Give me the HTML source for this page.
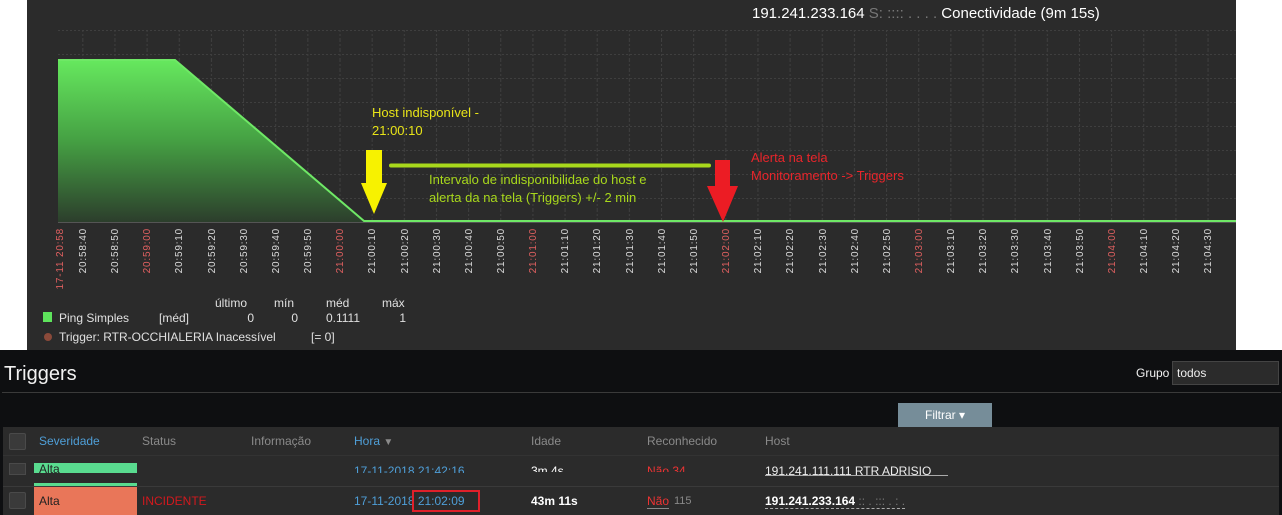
<!DOCTYPE html>
<html><head><meta charset="utf-8">
<style>
html,body{margin:0;padding:0;width:1282px;height:515px;overflow:hidden;background:#fff;font-family:"Liberation Sans",sans-serif;}
.abs{position:absolute;}
#bot{position:absolute;left:0;top:350px;width:1282px;height:165px;background:#0e0f11;}
.th{position:absolute;top:434px;font-size:12px;color:#8a8a8a;}
.cb{position:absolute;left:9px;width:15px;height:15px;background:#3a3a3a;border:1px solid #4a4a4a;border-radius:2px;}
</style></head><body>
<svg class="abs" style="left:0;top:0" width="1282" height="350" xmlns="http://www.w3.org/2000/svg">
<defs>
<linearGradient id="g" x1="0" y1="0" x2="0" y2="1">
<stop offset="0" stop-color="#66e85e"/><stop offset="0.5" stop-color="#45a043"/><stop offset="1" stop-color="#2c3e2c"/>
</linearGradient>
<pattern id="vg" x="18" y="0" width="32.15" height="10" patternUnits="userSpaceOnUse"><line x1="0.5" y1="0" x2="0.5" y2="10" stroke="#3f3f3f" stroke-dasharray="2,2"/></pattern>
</defs>
<rect x="27" y="0" width="1209" height="350" fill="#2b2b2b"/>
<rect x="58" y="30" width="1178" height="192" fill="url(#vg)"/>
<g stroke="#3f3f3f" stroke-dasharray="2,2">
<line x1="58" y1="30.5" x2="1236" y2="30.5"/><line x1="58" y1="54.5" x2="1236" y2="54.5"/>
<line x1="58" y1="78.5" x2="1236" y2="78.5"/><line x1="58" y1="102.5" x2="1236" y2="102.5"/>
<line x1="58" y1="126.5" x2="1236" y2="126.5"/><line x1="58" y1="150.5" x2="1236" y2="150.5"/>
<line x1="58" y1="174.5" x2="1236" y2="174.5"/><line x1="58" y1="198.5" x2="1236" y2="198.5"/>
</g>
<polygon points="58,60 175,60 364,221 364,222 58,222" fill="url(#g)"/>
<polyline points="58,60 175,60 364,221 1236,221" fill="none" stroke="#6fe866" stroke-width="2"/>
<line x1="58" y1="222.5" x2="1236" y2="222.5" stroke="#555"/>
<text x="752" y="18" fill="#fff" font-size="15">191.241.233.164 <tspan fill="#777">S: :::: .  . . .</tspan> Conectividade (9m 15s)</text>
<text x="372" y="117" fill="#e8e418" font-size="13">Host indisponível -</text>
<text x="372" y="135" fill="#e8e418" font-size="13">21:00:10</text>
<line x1="391" y1="165.5" x2="709" y2="165.5" stroke="#a8d81c" stroke-width="4" stroke-linecap="round"/>
<text x="429" y="184" fill="#a8d81c" font-size="13">Intervalo de indisponibilidae do host e</text>
<text x="429" y="202" fill="#a8d81c" font-size="13">alerta da na tela (Triggers) +/- 2 min</text>
<polygon points="366,150 382,150 382,183 387,183 374,214 361,183 366,183" fill="#f7f200"/>
<text x="751" y="162" fill="#e8252b" font-size="13">Alerta na tela</text>
<text x="751" y="180" fill="#e8252b" font-size="13">Monitoramento -&gt; Triggers</text>
<polygon points="715,160 730,160 730,186 738,186 723,222 707,186 715,186" fill="#ec1c24"/>
<g font-size="10" font-family="Liberation Sans,sans-serif" letter-spacing="0.8" fill="#dcdcdc" text-anchor="end">
<text transform="translate(63,228) rotate(-90)" fill="#e06060">17-11 20:58</text>
<text transform="translate(86,228) rotate(-90)">20:58:40</text>
<text transform="translate(118,228) rotate(-90)">20:58:50</text>
<text transform="translate(150,228) rotate(-90)" fill="#e06060">20:59:00</text>
<text transform="translate(182,228) rotate(-90)">20:59:10</text>
<text transform="translate(215,228) rotate(-90)">20:59:20</text>
<text transform="translate(247,228) rotate(-90)">20:59:30</text>
<text transform="translate(279,228) rotate(-90)">20:59:40</text>
<text transform="translate(311,228) rotate(-90)">20:59:50</text>
<text transform="translate(343,228) rotate(-90)" fill="#e06060">21:00:00</text>
<text transform="translate(375,228) rotate(-90)">21:00:10</text>
<text transform="translate(408,228) rotate(-90)">21:00:20</text>
<text transform="translate(440,228) rotate(-90)">21:00:30</text>
<text transform="translate(472,228) rotate(-90)">21:00:40</text>
<text transform="translate(504,228) rotate(-90)">21:00:50</text>
<text transform="translate(536,228) rotate(-90)" fill="#e06060">21:01:00</text>
<text transform="translate(568,228) rotate(-90)">21:01:10</text>
<text transform="translate(600,228) rotate(-90)">21:01:20</text>
<text transform="translate(633,228) rotate(-90)">21:01:30</text>
<text transform="translate(665,228) rotate(-90)">21:01:40</text>
<text transform="translate(697,228) rotate(-90)">21:01:50</text>
<text transform="translate(729,228) rotate(-90)" fill="#e06060">21:02:00</text>
<text transform="translate(761,228) rotate(-90)">21:02:10</text>
<text transform="translate(793,228) rotate(-90)">21:02:20</text>
<text transform="translate(826,228) rotate(-90)">21:02:30</text>
<text transform="translate(858,228) rotate(-90)">21:02:40</text>
<text transform="translate(890,228) rotate(-90)">21:02:50</text>
<text transform="translate(922,228) rotate(-90)" fill="#e06060">21:03:00</text>
<text transform="translate(954,228) rotate(-90)">21:03:10</text>
<text transform="translate(986,228) rotate(-90)">21:03:20</text>
<text transform="translate(1018,228) rotate(-90)">21:03:30</text>
<text transform="translate(1051,228) rotate(-90)">21:03:40</text>
<text transform="translate(1083,228) rotate(-90)">21:03:50</text>
<text transform="translate(1115,228) rotate(-90)" fill="#e06060">21:04:00</text>
<text transform="translate(1147,228) rotate(-90)">21:04:10</text>
<text transform="translate(1179,228) rotate(-90)">21:04:20</text>
<text transform="translate(1211,228) rotate(-90)">21:04:30</text>
</g>
<g font-size="12" fill="#e0e0e0">
<text x="215" y="307">último</text><text x="274" y="307">mín</text><text x="326" y="307">méd</text><text x="382" y="307">máx</text>
<rect x="43" y="312" width="9" height="10" fill="#5ee35c"/>
<text x="59" y="322">Ping Simples</text><text x="159" y="322">[méd]</text>
<text x="254" y="322" text-anchor="end">0</text><text x="298" y="322" text-anchor="end">0</text>
<text x="360" y="322" text-anchor="end">0.1111</text><text x="406" y="322" text-anchor="end">1</text>
<circle cx="48" cy="337" r="4" fill="#8b4a3a"/>
<text x="59" y="341">Trigger: RTR-OCCHIALERIA Inacessível</text><text x="311" y="341">[= 0]</text>
</g>
</svg>

<div id="bot"></div>
<div class="abs" style="left:4px;top:363px;font-size:20px;color:#f2f2f2;">Triggers</div>
<div class="abs" style="left:2px;top:392px;width:1279px;height:1px;background:#3a3a3a;"></div>
<div class="abs" style="left:1136px;top:366px;font-size:12px;color:#f2f2f2;">Grupo</div>
<div class="abs" style="left:1172px;top:361px;width:107px;height:24px;background:#2b2b2b;border:1px solid #444;box-sizing:border-box;color:#eee;font-size:12px;line-height:22px;padding-left:4px;">todos</div>
<div class="abs" style="left:898px;top:403px;width:94px;height:24px;background:#768d99;color:#fff;font-size:12px;line-height:24px;text-align:center;">Filtrar ▾</div>
<div class="abs" style="left:3px;top:427px;width:1276px;height:88px;background:#2b2b2b;"></div>
<div class="cb" style="top:433px"></div>
<div class="th" style="left:39px;color:#4f9fd8">Severidade</div>
<div class="th" style="left:142px">Status</div>
<div class="th" style="left:251px">Informação</div>
<div class="th" style="left:354px;color:#4f9fd8">Hora <span style="color:#8a8a8a;font-size:10px">▼</span></div>
<div class="th" style="left:531px">Idade</div>
<div class="th" style="left:647px">Reconhecido</div>
<div class="th" style="left:765px">Host</div>
<div class="abs" style="left:3px;top:455px;width:1276px;height:1px;background:#333;"></div>
<div class="cb" style="top:463px;height:10px;border-radius:0"></div>
<div class="abs" style="left:34px;top:463px;width:103px;height:10px;background:#59db8f;"></div>
<div class="abs" style="left:34px;top:483px;width:103px;height:3px;background:#59db8f;"></div>
<div class="abs" style="left:39px;top:462px;font-size:12px;color:#222;">Alta</div>
<div class="abs" style="left:354px;top:464px;font-size:12px;color:#4f9fd8;height:9px;overflow:hidden;">17-11-2018 21:42:16</div>
<div class="abs" style="left:531px;top:464px;font-size:12px;color:#fff;height:8px;overflow:hidden;">3m 4s</div>
<div class="abs" style="left:647px;top:464px;font-size:12px;color:#e33;height:8px;overflow:hidden;">Não 34</div>
<div class="abs" style="left:765px;top:464px;font-size:12px;color:#eee;height:11px;overflow:hidden;border-bottom:1px solid #aaa;width:183px;">191.241.111.111 RTR ADRISIO PRADO</div>
<div class="abs" style="left:3px;top:486px;width:1276px;height:1px;background:#3a3a3a;"></div>
<div class="cb" style="top:492px"></div>
<div class="abs" style="left:34px;top:487px;width:103px;height:28px;background:#e97659;"></div>
<div class="abs" style="left:39px;top:494px;font-size:12px;color:#222;">Alta</div>
<div class="abs" style="left:142px;top:494px;font-size:12px;color:#d2191e;">INCIDENTE</div>
<div class="abs" style="left:354px;top:494px;font-size:12px;color:#4f9fd8;">17-11-2018 21:02:09</div>
<div class="abs" style="left:412px;top:490px;width:68px;height:22px;border:2px solid #e0202a;box-sizing:border-box;"></div>
<div class="abs" style="left:531px;top:494px;font-size:12px;color:#fff;font-weight:bold;">43m 11s</div>
<div class="abs" style="left:647px;top:494px;font-size:12px;color:#e33;border-bottom:1px solid #888;">Não</div>
<div class="abs" style="left:674px;top:495px;font-size:11px;color:#888;">115</div>
<div class="abs" style="left:765px;top:494px;font-size:12px;color:#fff;font-weight:bold;border-bottom:1px dashed #aaa;">191.241.233.164 <span style="color:#777;font-weight:normal">:: . ::: . : .</span></div>
</body></html>
